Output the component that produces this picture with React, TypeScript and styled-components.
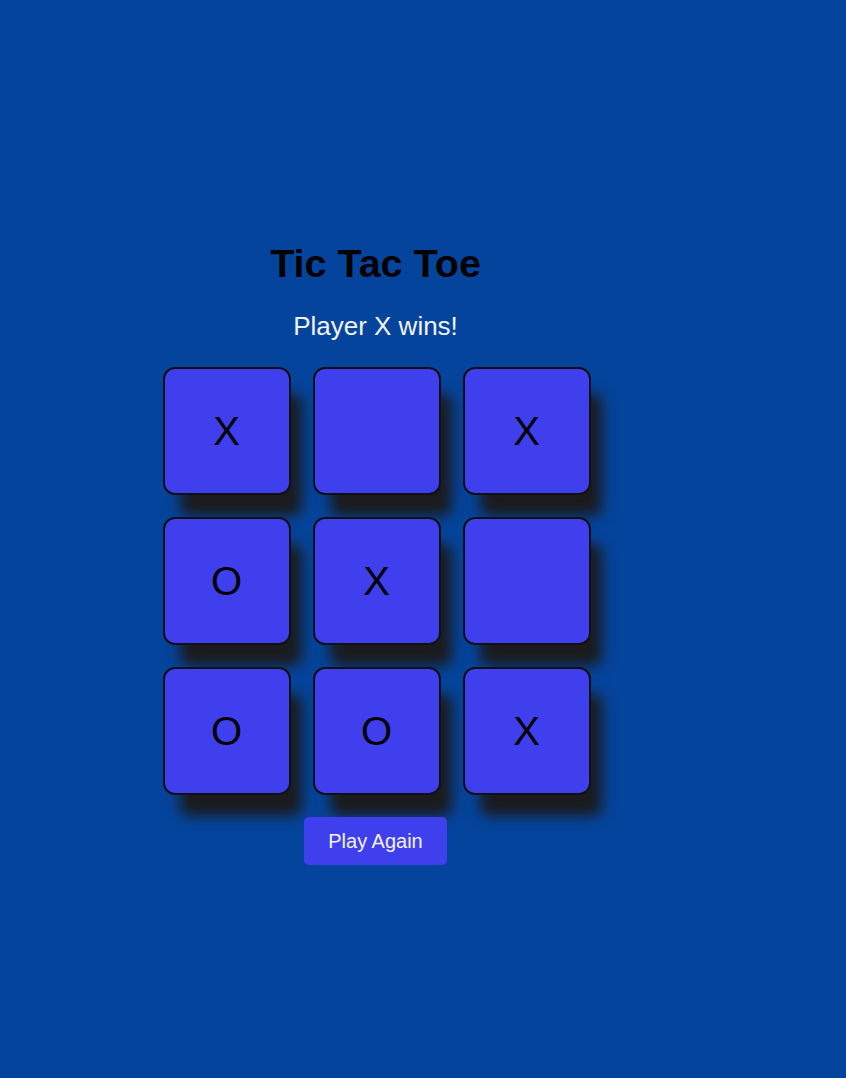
import React from "react";
import styled, { createGlobalStyle } from "styled-components";

const GlobalStyle = createGlobalStyle`
  html, body {
    margin: 0;
    padding: 0;
    background: #05449c;
    font-family: "Liberation Sans", Arial, sans-serif;
  }
`;

const Page = styled.div`
  min-height: 1078px;
  background: #05449c;
  display: flex;
  justify-content: flex-start;
`;

const Game = styled.div`
  width: 751px;
  padding-top: 243px;
  display: flex;
  flex-direction: column;
  align-items: center;
`;

const Title = styled.h1`
  margin: 0;
  font-size: 39.5px;
  line-height: 40px;
  font-weight: 700;
  color: #000;
`;

const Status = styled.p`
  margin: 30px 0 0;
  font-size: 26px;
  line-height: 26px;
  color: #f2f2f2;
`;

const Board = styled.div`
  margin: 28px 0 0 2px;
  display: grid;
  grid-template-columns: repeat(3, 128px);
  grid-auto-rows: 128px;
  gap: 22px;
`;

const Cell = styled.button<{ $filled: boolean }>`
  box-sizing: border-box;
  width: 128px;
  height: 128px;
  background: #403fed;
  border: 2px solid #111;
  border-radius: 12px;
  box-shadow: 14px 24px 14px -3px #1b1b1d;
  display: flex;
  align-items: center;
  justify-content: center;
  padding: 0;
  font-family: "Liberation Sans", Arial, sans-serif;
  font-size: 40px;
  color: #000;
  cursor: ${(p) => (p.$filled ? "default" : "pointer")};
`;

const PlayAgain = styled.button`
  margin-top: 22px;
  padding: 12px 24px;
  background: #403fed;
  color: #f2f2f2;
  border: none;
  border-radius: 5px;
  font-family: "Liberation Sans", Arial, sans-serif;
  font-size: 20px;
  line-height: 24px;
  cursor: pointer;
`;

const board = ["X", "", "X", "O", "X", "", "O", "O", "X"];

export default function App() {
  return (
    <>
      <GlobalStyle />
      <Page>
        <Game>
          <Title>Tic Tac Toe</Title>
          <Status>Player X wins!</Status>
          <Board>
            {board.map((v, i) => (
              <Cell key={i} $filled={v !== ""}>
                {v}
              </Cell>
            ))}
          </Board>
          <PlayAgain>Play Again</PlayAgain>
        </Game>
      </Page>
    </>
  );
}
